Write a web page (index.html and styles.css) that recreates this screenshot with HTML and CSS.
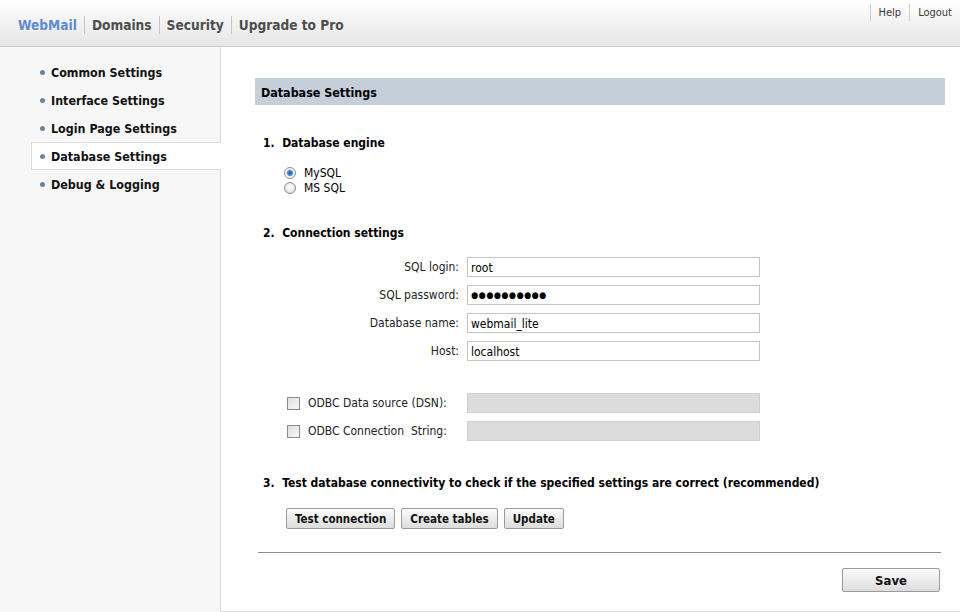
FILE: index.html
```html
<!DOCTYPE html>
<html>
<head>
<meta charset="utf-8">
<link rel="stylesheet" href="styles.css">
</head>
<body>
<div class="header">
  <nav class="topnav">
    <a class="tab active">WebMail</a>
    <a class="tab">Domains</a>
    <a class="tab">Security</a>
    <a class="tab">Upgrade to Pro</a>
  </nav>
  <div class="toplinks">
    <a class="tl">Help</a>
    <a class="tl">Logout</a>
  </div>
</div>
<div class="main">
  <aside class="sidebar">
    <ul class="menu">
      <li class="mi"><span class="dot"></span>Common Settings</li>
      <li class="mi"><span class="dot"></span>Interface Settings</li>
      <li class="mi"><span class="dot"></span>Login Page Settings</li>
      <li class="mi sel"><span class="dot"></span>Database Settings</li>
      <li class="mi"><span class="dot"></span>Debug &amp; Logging</li>
    </ul>
  </aside>
  <section class="content">
    <h2 class="title">Database Settings</h2>
    <h3 class="step">1.&nbsp; Database engine</h3>
    <div class="radios">
      <label class="radio"><span class="rb on"></span>MySQL</label>
      <label class="radio"><span class="rb"></span>MS SQL</label>
    </div>
    <h3 class="step s2">2.&nbsp; Connection settings</h3>
    <div class="form">
      <div class="row"><span class="lbl">SQL login:</span><span class="inp">root</span></div>
      <div class="row"><span class="lbl">SQL password:</span><span class="inp pw">●●●●●●●●●●</span></div>
      <div class="row"><span class="lbl">Database name:</span><span class="inp">webmail_lite</span></div>
      <div class="row"><span class="lbl">Host:</span><span class="inp">localhost</span></div>
    </div>
    <div class="odbc">
      <div class="orow"><span class="cb"></span><span class="olbl">ODBC Data source (DSN):</span><span class="inp dis"></span></div>
      <div class="orow"><span class="cb"></span><span class="olbl">ODBC Connection&nbsp; String:</span><span class="inp dis"></span></div>
    </div>
    <h3 class="step s3">3.&nbsp; Test database connectivity to check if the specified settings are correct (recommended)</h3>
    <div class="buttons">
      <button class="btn">Test connection</button>
      <button class="btn">Create tables</button>
      <button class="btn">Update</button>
    </div>
    <div class="footer">
      <button class="btn save">Save</button>
    </div>
  </section>
</div>
</body>
</html>
```
FILE: styles.css
```css
* { box-sizing: border-box; }
html, body { margin: 0; padding: 0; }
body {
  width: 960px;
  height: 612px;
  overflow: hidden;
  font-family: "DejaVu Sans Condensed", "DejaVu Sans", sans-serif;
  font-size: 12px;
  color: #000;
  background: #fff;
}
.header {
  height: 47px;
  background: linear-gradient(180deg, #ffffff 0%, #f4f4f4 40%, #e6e6e6 100%);
  border-bottom: 1px solid #cfcfcf;
  display: flex;
  justify-content: space-between;
}
.topnav {
  display: flex;
  align-items: center;
  padding-left: 11px;
  padding-top: 3px;
  height: 46px;
}
.tab {
  font-weight: bold;
  font-size: 13.6px;
  color: #4d4d4d;
  padding: 0 7px;
  line-height: 18px;
  border-left: 1px solid #c6c6c6;
}
.tab.active { color: #5b8bd0; border-left: none; }
.toplinks {
  display: flex;
  align-items: flex-start;
  padding-top: 4px;
  padding-right: 8px;
}
.tl {
  font-size: 11px;
  color: #3a3a3a;
  padding: 2px 8px 2px 8px;
  line-height: 13px;
  border-left: 1px solid #cfcfcf;
}
.tl:last-child { padding-right: 0; }
.main {
  display: flex;
  height: 565px;
}
.sidebar {
  width: 221px;
  background: #f7f7f7;
  border-right: 1px solid #dcdcdc;
  padding-top: 11px;
}
.menu { list-style: none; margin: 0; padding: 0 0 0 31px; }
.mi {
  height: 28px;
  display: flex;
  align-items: center;
  font-weight: bold;
  font-size: 12.4px;
  color: #111;
  padding-left: 9px;
  margin-right: -1px;
  border-top: 1px solid transparent;
  border-bottom: 1px solid transparent;
}
.mi.sel {
  background: #fff;
  border-top-color: #dcdcdc;
  border-bottom-color: #dcdcdc;
  border-left: 1px solid #dcdcdc;
  padding-left: 8px;
}
.dot {
  width: 5px; height: 5px;
  border-radius: 50%;
  background: #6b84a0;
  margin-right: 6px;
}
.content {
  flex: 1;
  border-bottom: 1px solid #dcdcdc;
  padding: 31px 15px 0 34px;
}
.title {
  margin: 0;
  height: 27px;
  background: #c4cfd9;
  font-size: 12.4px;
  font-weight: bold;
  line-height: 27px;
  padding: 1px 0 0 6px;
}
.step {
  margin: 30px 0 0 8px;
  font-size: 12px;
  font-weight: bold;
  line-height: 16px;
}
.step.s2 { margin-top: 30px; }
.step.s3 { margin-top: 34px; }
.radios {
  margin: 14px 0 0 29px;
  display: flex;
  flex-direction: column;
}
.radio {
  display: flex;
  align-items: center;
  height: 15px;
  font-size: 12px;
}
.rb {
  width: 12px; height: 12px;
  border-radius: 50%;
  border: 1px solid #8c8c8c;
  background: radial-gradient(circle at 50% 40%, #fff, #d8d8d8);
  margin-right: 8px;
}
.rb.on {
  background: radial-gradient(circle, #1b5fa8 0, #3c8fd6 2.5px, #e8e8e8 3.5px, #fff 5px);
}
.form {
  margin-top: 16px;
  display: flex;
  flex-direction: column;
  gap: 8px;
}
.row { display: flex; align-items: center; height: 20px; }
.lbl {
  width: 212px;
  text-align: right;
  padding-right: 8px;
  font-size: 12px;
  color: #222;
}
.inp {
  width: 293px;
  height: 20px;
  border: 1px solid #c5c5c5;
  background: #fff;
  padding: 1px 3px 0;
  line-height: 18px;
  font-size: 12px;
}
.inp.pw { font-size: 9px; letter-spacing: 0.5px; padding-top: 0; }
.odbc {
  margin-top: 32px;
  display: flex;
  flex-direction: column;
  gap: 8px;
}
.orow { display: flex; align-items: center; height: 20px; padding-left: 32px; }
.cb {
  width: 13px; height: 13px;
  border: 1px solid #8a8a8a;
  background: linear-gradient(135deg, #dedede, #f8f8f8);
  margin-right: 8px;
}
.olbl { width: 159px; font-size: 12px; color: #222; }
.inp.dis { background: #dcdcdc; border-color: #cfcfcf; }
.buttons {
  margin: 17px 0 0 31px;
  display: flex;
  gap: 6px;
}
.btn {
  font-family: inherit;
  font-weight: bold;
  font-size: 11.5px;
  height: 21px;
  padding: 0 8px;
  border: 1px solid #9a9a9a;
  border-radius: 2px;
  background: linear-gradient(180deg, #fbfbfb 0%, #ececec 50%, #dcdcdc 100%);
  color: #111;
}
.footer {
  margin: 23px 4px 0 3px;
  border-top: 1px solid #8f8f8f;
  display: flex;
  justify-content: flex-end;
  padding-top: 15px;
}
.btn.save { width: 98px; height: 24px; font-size: 13px; margin-right: 1px; }
```
